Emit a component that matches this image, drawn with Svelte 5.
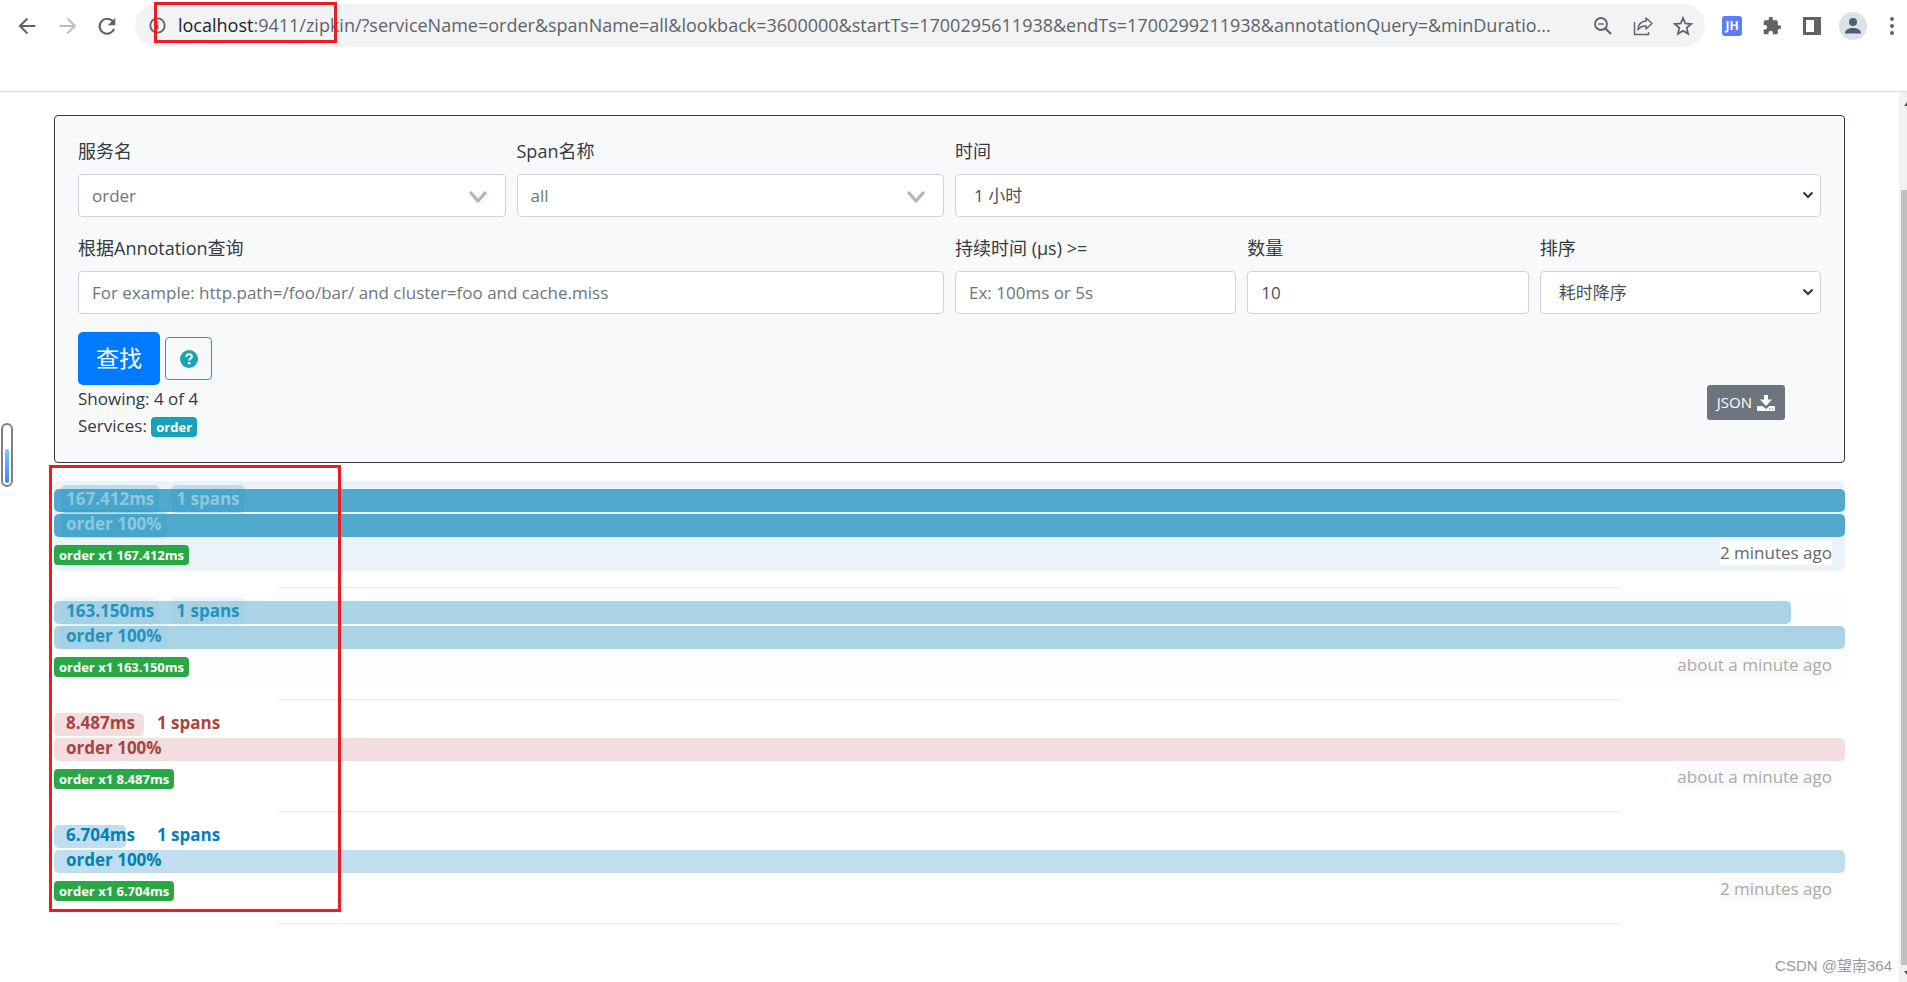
<script>
  let service = $state('order');
  let span = $state('all');
  let lookback = $state('1h');
  let sort = $state('desc');
  let limit = $state('10');

  const host = 'localhost';
  const path = ':9411/zipkin/?serviceName=order&spanName=all&lookback=3600000&startTs=1700295611938&endTs=1700299211938&annotationQuery=&minDuratio...';

  // width is the trace's share of the slowest one, in percent
  const traces = [
    { id: 1, duration: '167.412ms', width: 100, ago: '2 minutes ago', kind: 'hot' },
    { id: 2, duration: '163.150ms', width: 97, ago: 'about a minute ago', kind: 'warm' },
    { id: 3, duration: '8.487ms', width: 5, ago: 'about a minute ago', kind: 'error' },
    { id: 4, duration: '6.704ms', width: 4, ago: '2 minutes ago', kind: 'plain' }
  ];
</script>

{#snippet chevron()}
  <svg class="chevron" viewBox="0 0 18 12" aria-hidden="true"><path d="M2 2l7 8 7-8" fill="none" stroke="#adb5bd" stroke-width="3.2" stroke-linecap="round" stroke-linejoin="round"/></svg>
{/snippet}

{#snippet arrow()}
  <svg class="arrow" viewBox="0 0 12 8" aria-hidden="true"><path d="M1.5 1.500L6 6l4.500-4.500" fill="none" stroke="#343a40" stroke-width="2.2"/></svg>
{/snippet}

<div class="window">
  <header class="toolbar">
    <button class="nav" aria-label="Back"><svg viewBox="0 0 24 24"><path d="M22 12H4M12.500 3l-9 9 9 9" fill="none" stroke="#5f6368" stroke-width="2.4"/></svg></button>
    <button class="nav" aria-label="Forward"><svg viewBox="0 0 24 24"><path d="M3 12h18M12.500 3l9 9-9 9" fill="none" stroke="#babcbe" stroke-width="2.4"/></svg></button>
    <button class="nav" aria-label="Reload"><svg viewBox="0 0 24 24"><path d="M20.500 15.500a9 9 0 1 1-1.500-9" fill="none" stroke="#5f6368" stroke-width="2.6"/><path d="M22 2v9h-9z" fill="#5f6368"/></svg></button>
    <div class="omnibox">
      <svg class="info" viewBox="0 0 18 18" aria-hidden="true"><circle cx="9" cy="9" r="7.6" fill="none" stroke="#5f6368" stroke-width="2"/><path d="M9 8v5M9 5v2" stroke="#5f6368" stroke-width="2"/></svg>
      <span class="url"><span class="host">{host}</span>{path}</span>
      <button class="act" aria-label="Zoom"><svg viewBox="0 0 20 20"><circle cx="8" cy="8" r="6" fill="none" stroke="#5f6368" stroke-width="1.8"/><path d="M12.500 12.500L18 18" stroke="#5f6368" stroke-width="2.2"/><path d="M5 8h6" stroke="#5f6368" stroke-width="1.4"/></svg></button>
      <button class="act" aria-label="Share"><svg viewBox="0 0 20 20"><path d="M1.500 6v12.500H15.500V16" fill="none" stroke="#5f6368" stroke-width="1.4"/><path d="M13 2l6 5.500-6 5.500V10c-4 0-6.500 1-8 4C5 9 8 5.500 13 5z" fill="none" stroke="#5f6368" stroke-width="1.4" stroke-linejoin="round"/></svg></button>
      <button class="act" aria-label="Bookmark"><svg viewBox="0 0 20 20"><path d="M10 2l2.300 5.500 6 .5-4.600 3.900 1.400 5.900L10 14.700l-5.100 3.100 1.400-5.900L1.700 8l6-.5z" fill="none" stroke="#5f6368" stroke-width="1.8"/></svg></button>
    </div>
    <div class="extensions">
      <button class="jh" aria-label="JH extension">JH</button>
      <button class="act" aria-label="Extensions"><svg viewBox="0 0 24 24"><path d="M20.500 11H19V7a2 2 0 0 0-2-2h-4V3.500a2.500 2.500 0 0 0-5 0V5H4a2 2 0 0 0-2 2v3.800h1.500a2.700 2.700 0 0 1 0 5.400H2V20a2 2 0 0 0 2 2h3.800v-1.500a2.700 2.700 0 0 1 5.400 0V22H17a2 2 0 0 0 2-2v-4h1.500a2.500 2.500 0 0 0 0-5z" fill="#5f6368"/></svg></button>
      <button class="act" aria-label="Side panel"><svg viewBox="0 0 20 20"><path d="M1 1h18v18H1zM4 4v12h8V4z" fill="#5f6368" fill-rule="evenodd"/></svg></button>
      <button class="avatar" aria-label="Profile"><svg viewBox="0 0 28 28"><circle cx="14" cy="14" r="14" fill="#dee1e6"/><circle cx="14" cy="10" r="4" fill="#4d5c78"/><path d="M6 21.500c0-4 4-5.500 8-5.500s8 1.500 8 5.500z" fill="#4d5c78"/></svg></button>
      <button class="more" aria-label="Menu"><svg viewBox="0 0 4 18"><circle cx="2" cy="2" r="2" fill="#5f6368"/><circle cx="2" cy="9" r="2" fill="#5f6368"/><circle cx="2" cy="16" r="2" fill="#5f6368"/></svg></button>
    </div>
    <div class="mark mark-url"></div>
  </header>

  <div class="viewport">
    <main>
      <form class="panel" onsubmit={(e) => e.preventDefault()}>
        <div class="grid">
          <div class="field w3">
            <label for="service">服务名</label>
            <div class="combo muted"><input id="service" bind:value={service} />{@render chevron()}</div>
          </div>
          <div class="field w3">
            <label for="span">Span名称</label>
            <div class="combo muted"><input id="span" bind:value={span} />{@render chevron()}</div>
          </div>
          <div class="field w6">
            <label for="lookback">时间</label>
            <div class="combo"><select id="lookback" bind:value={lookback}><option value="1h">1 小时</option></select>{@render arrow()}</div>
          </div>
          <div class="field w6">
            <label for="annotation">根据Annotation查询</label>
            <input id="annotation" placeholder="For example: http.path=/foo/bar/ and cluster=foo and cache.miss" />
          </div>
          <div class="field w2">
            <label for="duration">持续时间 (μs) &gt;=</label>
            <input id="duration" placeholder="Ex: 100ms or 5s" />
          </div>
          <div class="field w2">
            <label for="limit">数量</label>
            <input id="limit" bind:value={limit} />
          </div>
          <div class="field w2">
            <label for="sort">排序</label>
            <div class="combo"><select id="sort" bind:value={sort}><option value="desc">耗时降序</option></select>{@render arrow()}</div>
          </div>
        </div>

        <div class="actions">
          <button class="find" type="submit">查找</button>
          <button class="help" type="button" aria-label="Help"><svg viewBox="0 0 18 18"><circle cx="9" cy="9" r="9" fill="#17a2b8"/><path d="M6.300 6.800C6.500 5 7.600 4.300 9.100 4.300c1.600 0 2.800.9 2.800 2.300 0 2-2.700 2-2.700 3.800" fill="none" stroke="#f8f9fa" stroke-width="2.1"/><circle cx="9.200" cy="13.200" r="1.400" fill="#f8f9fa"/></svg></button>
        </div>

        <div class="summary">
          <div>
            <div>Showing: 4 of 4</div>
            <div>Services: <span class="badge teal">order</span></div>
          </div>
          <button class="json" type="button">JSON <svg viewBox="0 0 18 16" aria-hidden="true"><path d="M7 0h4v4.500h4L9 11 3 4.500h4z" fill="#fff"/><path d="M0 11h5.500L9 14l3.500-3H18v5H0z" fill="#fff"/><path d="M12 14h1.400M15 14h1.400" stroke="#6c757d" stroke-width="1.2"/></svg></button>
        </div>
      </form>

      <ul class="traces">
        {#each traces as t (t.id)}
          <li>
            <div class="trace {t.kind}">
              <div class="track">
                <div class="bar" style="width: {t.width}%"></div>
                <div class="tags"><span class="tag">{t.duration}</span><span class="tag">1 spans</span></div>
              </div>
              <div class="track">
                <div class="bar" style="width: 100%"></div>
                <div class="tags"><span class="tag">order 100%</span></div>
              </div>
              <div class="foot">
                <span class="badge green">order x1 {t.duration}</span>
                <span class="ago">{t.ago}</span>
              </div>
            </div>
            <hr />
          </li>
        {/each}
      </ul>
      <div class="mark mark-traces"></div>
    </main>
    <div class="scrollbar">
      <svg class="up" viewBox="0 0 3 4" aria-hidden="true"><path d="M3 0v4H0z" fill="#505050"/></svg>
      <div class="thumb"></div>
      <svg class="down" viewBox="0 0 3 4" aria-hidden="true"><path d="M0 0h3v4z" fill="#505050"/></svg>
    </div>
  </div>

  <div class="gauge"><div></div></div>
  <div class="watermark">CSDN @望南364</div>
</div>

<style>
  :global(body) { background: #fff; }
  .window { position: relative; min-height: 100vh; display: flex; flex-direction: column; overflow: hidden;
    font-family: "Open Sans", "Noto Sans CJK SC", sans-serif; font-size: 17px; line-height: 27px; color: #343a40; }
  .window * { box-sizing: border-box; }
  button { font: inherit; border: 0; padding: 0; background: none; cursor: pointer; }
  svg { display: block; }

  .toolbar { position: relative; display: flex; align-items: center; height: 92px; padding: 4px 13px 44px 17px;
    border-bottom: 1px solid #dadce0; }
  .nav { width: 20px; height: 20px; margin-right: 20px; flex: none; }
  .nav svg { width: 20px; height: 20px; }
  .nav + .omnibox { margin-left: -2px; }
  .omnibox { flex: 1; min-width: 0; height: 43px; display: flex; align-items: center; gap: 20px; padding: 0 12px 0 14px;
    border-radius: 22px; background: #f1f3f4; }
  .info { width: 17px; height: 17px; flex: none; margin-right: -8px; }
  .url { flex: 1; min-width: 0; overflow: hidden; white-space: nowrap; font-size: 18px; color: #5f6368; }
  .host { color: #202124; }
  .act { width: 20px; height: 20px; flex: none; }
  .act svg { width: 20px; height: 20px; }
  .extensions { display: flex; align-items: center; gap: 20px; padding-left: 17px; }
  .jh { width: 20px; height: 20px; border-radius: 3px; background: #5c7cfa; color: #fff; font-size: 12px; font-weight: 700; line-height: 20px; }
  .avatar { margin: 0 3px 0 -3px; }
  .avatar svg { width: 28px; height: 28px; }
  .more svg { width: 4px; height: 18px; }

  .viewport { flex: 1; display: flex; }
  main { flex: 1; min-width: 0; position: relative; padding: 23px 54px 0; }
  .panel { border: 1px solid #343a40; border-radius: 4px; background: #f8f9fa; padding: 22px 23px 23px; }
  .grid { display: grid; grid-template-columns: repeat(12, 1fr); column-gap: 11px; row-gap: 18px; }
  .field { display: flex; flex-direction: column; gap: 9px; }
  .field label { font-size: 18px; }
  .w2 { grid-column: span 2; }
  .w3 { grid-column: span 3; }
  .w6 { grid-column: span 6; }
  input, select { display: block; font: inherit; width: 100%; height: 43px; padding: 0 13px; border: 1px solid #ced4da;
    border-radius: 4px; background: #fff; color: #495057; outline: 0; }
  input::placeholder { color: #6c757d; opacity: 1; }
  select { appearance: none; padding-left: 18px; }
  .combo { position: relative; }
  .muted input { color: #6c757d; }
  .chevron { position: absolute; right: 19px; top: 17px; width: 18px; height: 12px; pointer-events: none; }
  .arrow { position: absolute; right: 7px; top: 17px; width: 12px; height: 8px; pointer-events: none; }

  .actions { display: flex; align-items: center; gap: 5px; margin-top: 18px; }
  .find { height: 53px; padding: 0 18px; border-radius: 5px; background: #007bff; color: #fff; font-size: 23px; }
  .help { display: grid; place-items: center; width: 47px; height: 43px; border: 1px solid #17a2b8; border-radius: 4px; }
  .help svg { width: 18px; height: 18px; }
  .summary { display: flex; justify-content: space-between; align-items: flex-start; padding-right: 36px; }
  .json { display: flex; align-items: center; gap: 5px; height: 35px; padding: 0 10px; border-radius: 3px;
    background: #6c757d; color: #fff; font-size: 15px; }
  .json svg { width: 18px; height: 16px; }
  .badge { display: inline-block; padding: 0 5px; border-radius: 4px; color: #fff; font-size: 13px; font-weight: 700; line-height: 20px; }
  .teal { background: #17a2b8; }
  .green { background: #28a745; }

  .traces { list-style: none; margin: 18px 0 0; padding: 0; }
  .traces li { height: 112px; }
  .trace { padding: 8px 0 6px; border-radius: 5px; }
  .track { position: relative; height: 23px; margin-bottom: 2px; }
  .bar { height: 100%; border-radius: 5px; background: #c1deee; }
  .tags { position: absolute; left: 7px; top: -4px; display: flex; gap: 12px; }
  .tag { padding: 0 5px; border-radius: 5px; line-height: 28px; font-size: 17px; font-weight: 700; color: #0081b8; }
  .foot { display: flex; justify-content: space-between; align-items: flex-end; height: 26px; padding-right: 13px; }
  .ago { line-height: 24px; background: #fafafa; color: #aaa; }
  .hot { background: #ebf4fb; }
  .hot .bar { background: #51a9cd; }
  .hot .tag { color: #8fc8de; background: rgba(45, 150, 195, .25); }
  .hot .ago { background: #fff; color: #666; }
  .warm { background: #fcfdff; }
  .warm .bar { background: #aad3e6; }
  .warm .tag { color: #2491bf; background: rgba(130, 195, 225, .12); }
  .error .bar { background: #f2dede; }
  .error .tag { color: #a94442; }
  hr { width: 75%; margin: 16px auto 0; border: 0; border-top: 1px solid #ececec; }

  .scrollbar { width: 8px; display: flex; flex-direction: column; align-items: flex-end; background: #f1f1f1; }
  .thumb { flex: 1; width: 6px; background: #c1c1c1; }
  .up, .down { width: 3px; height: 4px; }
  .up { margin: 10px 0 84px; }
  .down { margin: 6px 0 7px; }

  .mark { position: absolute; border: 3px solid #ed1c24; pointer-events: none; }
  .mark-url { left: 154px; top: 2px; width: 183px; height: 41px; }
  .mark-traces { left: 49px; top: 373px; width: 292px; height: 447px; }
  .gauge { position: absolute; left: 1px; top: 423px; width: 12px; height: 64px; padding: 2px; border: 2px solid #808080; border-radius: 6px;
    display: flex; align-items: flex-end; background: #fff; }
  .gauge div { width: 100%; height: 34px; border-radius: 2px; background: linear-gradient(#7cc8ff, #3d85ff); }
  .watermark { position: absolute; right: 15px; bottom: 3px; font-family: "Liberation Sans", "Noto Sans CJK SC", sans-serif; font-size: 15px; color: #999; }
</style>
